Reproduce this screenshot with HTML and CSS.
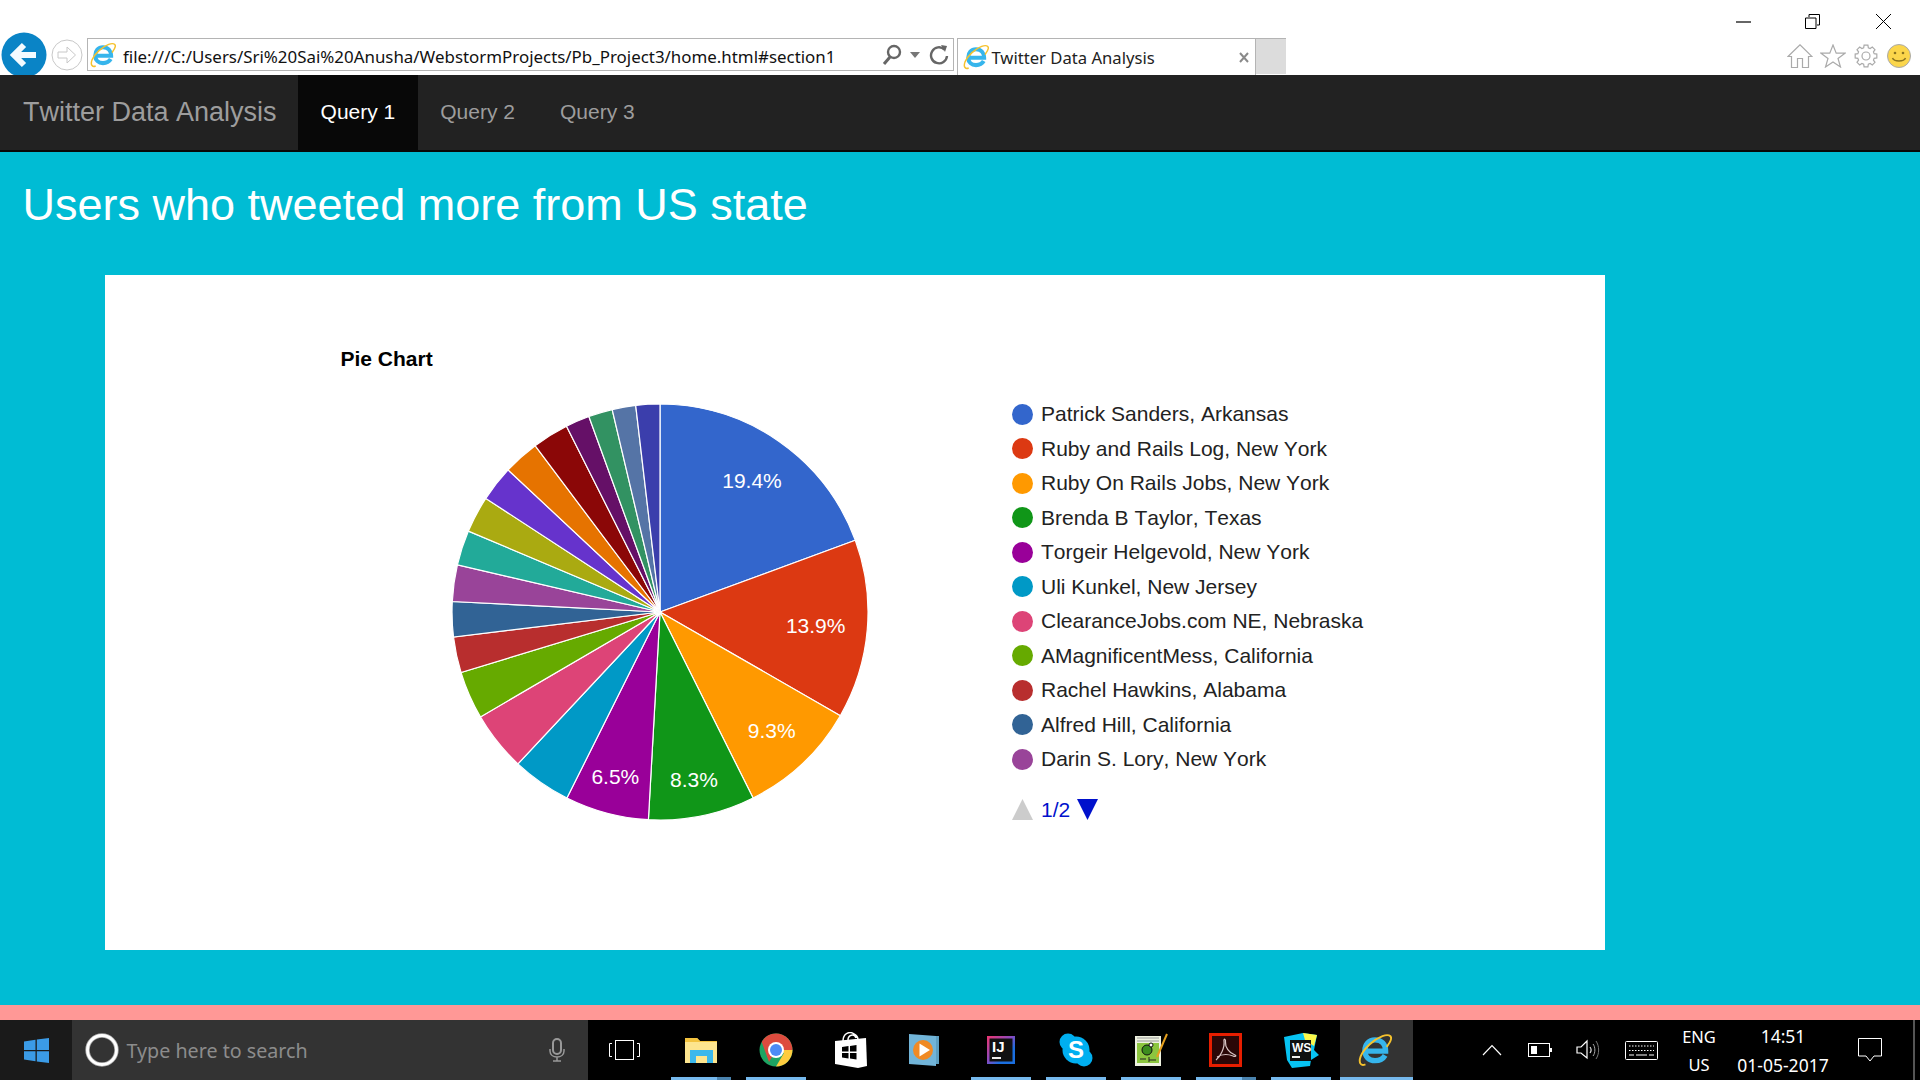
FILE: index.html
```html
<!DOCTYPE html>
<html lang="en">
<head>
<meta charset="utf-8">
<title>Twitter Data Analysis</title>
<link rel="stylesheet" href="styles.css">
</head>
<body>
<svg class="defs" width="0" height="0" aria-hidden="true">
  <symbol id="ie" viewBox="0 0 32 32">
    <path d="M7.500 17H26C26 10.500 22 6.500 16 6.500C10 6.500 6.500 11 6.500 16.500C6.500 22.500 10.500 26 16 26C20 26 23.500 24.500 25.500 21" fill="none" stroke="#36b5ec" stroke-width="5"/>
    <path d="M7 29.500C2 31.500 .5 27.500 2.500 22C6 14 15 6 23 3C28 1 32 2 31 6C30.500 8.500 28.500 11 27 13" fill="none" stroke="#f5c22d" stroke-width="1.800"/>
  </symbol>
</svg>

<header class="chrome">
  <div class="window-controls">
    <svg class="wc-min" width="15" height="2" viewBox="0 0 15 2"><path d="M0 1H15" stroke="#000" stroke-width="1.200"/></svg>
    <svg class="wc-restore" width="15" height="15" viewBox="0 0 15 15"><path d="M4 3V.5H14.500V11H12M.5 4H11V14.500H.5Z" fill="none" stroke="#000"/></svg>
    <svg class="wc-close" width="15" height="15" viewBox="0 0 15 15"><path d="M0 0L15 15M15 0L0 15" stroke="#000"/></svg>
  </div>
  <div class="toolbar">
    <svg class="back" width="46" height="46" viewBox="0 0 46 46"><circle cx="23" cy="23" r="22.500" fill="#0a84c6"/><path d="M35 23H14M23 13L13 23L23 33" fill="none" stroke="#f4fbff" stroke-width="6"/></svg>
    <svg class="forward" width="32" height="32" viewBox="0 0 32 32"><circle cx="16" cy="16" r="15" fill="#fff" stroke="#c8c8c8"/><path d="M7 13H16V8L24.500 16L16 24V19H7Z" fill="none" stroke="#c8c8c8"/></svg>
    <div class="address">
      <svg class="addr-ie" width="26" height="26"><use href="#ie"/></svg>
      <span class="url">file:///C:/Users/Sri%20Sai%20Anusha/WebstormProjects/Pb_Project3/home.html#section1</span>
      <svg class="addr-search" width="22" height="24" viewBox="0 0 22 24"><circle cx="13" cy="9" r="6" fill="none" stroke="#666" stroke-width="2.400"/><path d="M9 14L3 21" stroke="#666" stroke-width="3"/></svg>
      <svg class="addr-drop" width="10" height="6" viewBox="0 0 10 6"><path d="M0 0H10L5 6Z" fill="#777"/></svg>
      <svg class="addr-refresh" width="20" height="24" viewBox="0 0 20 24"><path d="M15.500 6.500A8 8 0 1 0 18 13" fill="none" stroke="#666" stroke-width="2.400"/><path d="M12 2L18 3L16 9Z" fill="#666"/></svg>
    </div>
    <div class="tab">
      <svg class="tab-ie" width="26" height="26"><use href="#ie"/></svg>
      <span class="tab-title">Twitter Data Analysis</span>
      <svg class="tab-close" width="10" height="11" viewBox="0 0 10 11"><path d="M1 1L9 10M9 1L1 10" stroke="#8a8a8a" stroke-width="2"/></svg>
    </div>
    <div class="new-tab"></div>
    <div class="tools">
      <svg width="26" height="24" viewBox="0 0 26 24"><path d="M1 12.500L13 .8L25 12.500H21.500V23.500H15.500V14.500H10.500V23.500H4.500V12.500Z" fill="none" stroke="#aaa" stroke-width="1.200"/></svg>
      <svg width="26" height="24" viewBox="0 0 26 24"><path d="M13 1L16.200 9.200H25L18 14.500L20.500 23L13 18L5.500 23L8 14.500L1 9.200H9.800Z" fill="none" stroke="#aaa" stroke-width="1.200"/></svg>
      <svg width="26" height="24" viewBox="-1 0 26 24"><path d="M9.660 3.830L10.090 1.170H13.910L14.340 3.830L16.120 4.560L18.310 2.990L21.010 5.690L19.440 7.880L20.170 9.660L22.830 10.090V13.910L20.170 14.340L19.440 16.120L21.010 18.310L18.310 21.010L16.120 19.440L14.340 20.170L13.910 22.830H10.090L9.660 20.170L7.880 19.440L5.690 21.010L2.990 18.310L4.560 16.120L3.830 14.340L1.170 13.910V10.090L3.830 9.660L4.560 7.880L2.990 5.690L5.690 2.990L7.880 4.560Z" fill="none" stroke="#aaa" stroke-width="1.200"/><circle cx="12" cy="12" r="4" fill="none" stroke="#aaa" stroke-width="1.200"/></svg>
      <svg width="26" height="24" viewBox="-1 0 26 24"><circle cx="12" cy="12" r="11.500" fill="#fbd64b" stroke="#aaa"/><circle cx="8" cy="9" r="1.300" fill="#8a7420"/><circle cx="16" cy="9" r="1.300" fill="#8a7420"/><path d="M5.500 14C7 18 17 18 18.500 14" fill="none" stroke="#8a7420" stroke-width="1.500"/></svg>
    </div>
  </div>
</header>

<nav class="navbar">
  <a class="brand">Twitter Data Analysis</a>
  <a class="nav-link active">Query 1</a>
  <a class="nav-link">Query 2</a>
  <a class="nav-link">Query 3</a>
</nav>

<main class="content">
  <h1 class="page-title">Users who tweeted more from US state</h1>
  <section class="card">
    <h2 class="chart-title">Pie Chart</h2>
    <div class="chart-row">
      <svg class="pie" width="420" height="420" viewBox="-210 -210 420 420">
        <g stroke="#fff" stroke-width="1.200">
          <path fill="#3366cc" d="M0 0L0 -208A208 208 0 0 1 195.300 -71.700Z"/>
          <path fill="#dc3912" d="M0 0L195.300 -71.700A208 208 0 0 1 180.300 103.700Z"/>
          <path fill="#ff9900" d="M0 0L180.300 103.700A208 208 0 0 1 93.100 186Z"/>
          <path fill="#109618" d="M0 0L93.100 186A208 208 0 0 1 -11.600 207.700Z"/>
          <path fill="#990099" d="M0 0L-11.600 207.700A208 208 0 0 1 -93.100 186Z"/>
          <path fill="#0099c6" d="M0 0L-93.100 186A208 208 0 0 1 -142.100 151.900Z"/>
          <path fill="#dd4477" d="M0 0L-142.100 151.900A208 208 0 0 1 -179.600 104.900Z"/>
          <path fill="#66aa00" d="M0 0L-179.600 104.900A208 208 0 0 1 -199 60.500Z"/>
          <path fill="#b82e2e" d="M0 0L-199 60.500A208 208 0 0 1 -206.500 25Z"/>
          <path fill="#316395" d="M0 0L-206.500 25A208 208 0 0 1 -207.700 -10.500Z"/>
          <path fill="#994499" d="M0 0L-207.700 -10.500A208 208 0 0 1 -202.600 -47.200Z"/>
          <path fill="#22aa99" d="M0 0L-202.600 -47.200A208 208 0 0 1 -191.600 -80.900Z"/>
          <path fill="#aaaa11" d="M0 0L-191.600 -80.900A208 208 0 0 1 -174.200 -113.600Z"/>
          <path fill="#6633cc" d="M0 0L-174.200 -113.600A208 208 0 0 1 -151.900 -142.100Z"/>
          <path fill="#e67300" d="M0 0L-151.900 -142.100A208 208 0 0 1 -124.900 -166.300Z"/>
          <path fill="#8b0707" d="M0 0L-124.900 -166.300A208 208 0 0 1 -93.500 -185.800Z"/>
          <path fill="#651067" d="M0 0L-93.500 -185.800A208 208 0 0 1 -71.100 -195.500Z"/>
          <path fill="#329262" d="M0 0L-71.100 -195.500A208 208 0 0 1 -47.800 -202.400Z"/>
          <path fill="#5574a6" d="M0 0L-47.800 -202.400A208 208 0 0 1 -24.300 -206.600Z"/>
          <path fill="#3b3eac" d="M0 0L-24.300 -206.600A208 208 0 0 1 0 -208Z"/>
        </g>
        <g class="pie-labels">
          <text x="92" y="-124.500">19.4%</text>
          <text x="155.700" y="20.500">13.9%</text>
          <text x="111.700" y="126">9.3%</text>
          <text x="34" y="175">8.3%</text>
          <text x="-44.700" y="172">6.5%</text>
        </g>
      </svg>
      <div class="legend">
        <div class="legend-row"><i class="dot c1"></i>Patrick Sanders, Arkansas</div>
        <div class="legend-row"><i class="dot c2"></i>Ruby and Rails Log, New York</div>
        <div class="legend-row"><i class="dot c3"></i>Ruby On Rails Jobs, New York</div>
        <div class="legend-row"><i class="dot c4"></i>Brenda B Taylor, Texas</div>
        <div class="legend-row"><i class="dot c5"></i>Torgeir Helgevold, New York</div>
        <div class="legend-row"><i class="dot c6"></i>Uli Kunkel, New Jersey</div>
        <div class="legend-row"><i class="dot c7"></i>ClearanceJobs.com NE, Nebraska</div>
        <div class="legend-row"><i class="dot c8"></i>AMagnificentMess, California</div>
        <div class="legend-row"><i class="dot c9"></i>Rachel Hawkins, Alabama</div>
        <div class="legend-row"><i class="dot c10"></i>Alfred Hill, California</div>
        <div class="legend-row"><i class="dot c11"></i>Darin S. Lory, New York</div>
        <div class="pager">
          <svg width="21" height="21" viewBox="0 0 21 21"><path d="M0 21L10.500 0L21 21Z" fill="#ccc"/></svg>
          <span class="pager-text">1/2</span>
          <svg width="21" height="21" viewBox="0 0 21 21"><path d="M0 0H21L10.500 21Z" fill="#0011cc"/></svg>
        </div>
      </div>
    </div>
  </section>
</main>

<div class="strip"></div>

<footer class="taskbar">
  <div class="start">
    <svg width="25" height="25" viewBox="0 0 25 25"><path d="M0 3.500L11.500 1.800V12H0ZM12.800 1.600L25 0V12H12.800ZM0 13.200H11.500V23.300L0 21.600ZM12.800 13.200H25V25L12.800 23.500Z" fill="#3b9be6"/></svg>
  </div>
  <div class="search">
    <svg class="cortana" width="34" height="34" viewBox="0 0 34 34"><circle cx="17" cy="17" r="14.500" fill="none" stroke="#aaa" stroke-width="4.400"/><circle cx="17" cy="17" r="14.500" fill="none" stroke="#fff" stroke-width="2.800"/></svg>
    <span class="search-text">Type here to search</span>
    <svg class="mic" width="16" height="24" viewBox="0 0 16 24"><rect x="4" y="1" width="8" height="15" rx="4" fill="none" stroke="#999" stroke-width="2"/><path d="M1 11V13C1 21 15 21 15 13V11M8 19V23M4 23H12" fill="none" stroke="#999" stroke-width="1.500"/></svg>
  </div>
  <div class="task-view">
    <svg width="32" height="20" viewBox="0 0 32 20"><rect x="6.500" y=".5" width="18" height="19" fill="none" stroke="#fff"/><path d="M3 3.500H.5V16.500H3M28 3.500H30.500V16.500H28" fill="none" stroke="#fff"/></svg>
  </div>
  <div class="app running split">
    <svg width="34" height="28" viewBox="0 0 34 28"><path d="M1 2H13L16 5H33V27H1Z" fill="#fde58f"/><path d="M1 2H13L16 5H33V6H1Z" fill="#f3c33f"/><path d="M6 27V14H29V27H23V20H12V27Z" fill="#3bb8ec"/></svg>
  </div>
  <div class="app running">
    <svg width="34" height="34" viewBox="0 0 34 34"><circle cx="17" cy="17" r="16.500" fill="#1da462"/><path d="M17 .5A16.500 16.500 0 0 1 33.500 17H17L10 29L2.700 9A16.500 16.500 0 0 1 17 .5Z" fill="#dd4b3e"/><path d="M17 17H33.500A16.500 16.500 0 0 1 17 33.500L25 20Z" fill="#fecc3f"/><circle cx="17" cy="17" r="8" fill="#fff"/><circle cx="17" cy="17" r="6" fill="#4c8bf5"/></svg>
  </div>
  <div class="app">
    <svg width="34" height="36" viewBox="0 0 34 36"><path d="M1 9L32 6L33 34L24 36L1 32Z" fill="#fff"/><path d="M9 9C9 1 16 -1 20 2C24 4 24 6 24 8M14 8C14 3 20 1 22 6" fill="none" stroke="#fff" stroke-width="1.500"/><path d="M8 15L14.500 14V19.500H8ZM16 14L22.500 13V19.500H16ZM8 21H14.500V26.500L8 25.500ZM16 21H22.500V27.500L16 26.500Z" fill="#000"/></svg>
  </div>
  <div class="app app-wmp">
    <svg width="30" height="34" viewBox="0 0 30 34"><path d="M27 3H30V31H27Z" fill="#5d9fc1"/><path d="M0 1L27 3V33L0 31Z" fill="#71b4d8"/><circle cx="14" cy="17" r="10" fill="#f08a24"/><path d="M10.500 10.500L21 17L10.500 23.500Z" fill="#fff"/></svg>
  </div>
  <div class="app running">
    <svg width="28" height="28" viewBox="0 0 28 28"><defs><linearGradient id="ij" x1="0" y1="0" x2="1" y2="1"><stop offset="0" stop-color="#f0356f"/><stop offset=".45" stop-color="#8a4ac0"/><stop offset=".7" stop-color="#1a6fe0"/></linearGradient></defs><rect width="28" height="28" fill="url(#ij)"/><rect x="2.500" y="2.500" width="23" height="23" fill="#111"/><text class="ico-text ij" x="5" y="16">IJ</text><path d="M5 22H14" stroke="#eee" stroke-width="2"/></svg>
  </div>
  <div class="app running">
    <svg width="34" height="34" viewBox="0 0 34 34"><circle cx="17" cy="17" r="13.500" fill="#00aff0"/><circle cx="9" cy="9" r="8.500" fill="#00aff0"/><circle cx="25" cy="25" r="8.500" fill="#00aff0"/><text class="ico-text skype" x="17" y="25">S</text></svg>
  </div>
  <div class="app running">
    <svg width="34" height="34" viewBox="0 0 34 34"><rect x="1" y="3" width="26" height="30" fill="#eef2e0"/><path d="M3 5H25M3 8H25" stroke="#9a9a9a"/><rect x="3" y="10" width="22" height="20" fill="#8cc63f"/><circle cx="13" cy="17" r="5" fill="#3c8d1e" stroke="#111"/><circle cx="17" cy="12" r="2" fill="#fff" stroke="#111"/><path d="M6 26H12M15 24V29M15 27H22" stroke="#222"/><path d="M23 24L33 1" stroke="#e5a01e" stroke-width="2"/></svg>
  </div>
  <div class="app running split">
    <svg width="33" height="34" viewBox="0 0 33 34"><rect x="1.500" y="1.500" width="30" height="31" fill="#2a0707" stroke="#e61e00" stroke-width="3"/><path d="M7 27C11 24 16 15 15 8C14.500 5 17 6 16.500 9C16 14 20 20 26 22C28 23 26 24 24 23C19 21 13 21 8 24" fill="none" stroke="#d8c4c4" stroke-width="1.200"/></svg>
  </div>
  <div class="app running">
    <svg width="36" height="36" viewBox="0 0 36 36"><path d="M1 5L20 1L34 3L31 18L36 23L28 28L27 34L9 36L4 28Z" fill="#07c3f2"/><path d="M20 1L34 3L31 14L22 8Z" fill="#fcf84a"/><rect x="7" y="8" width="21" height="21" fill="#111"/><text class="ico-text ws" x="9" y="20">WS</text><path d="M9 25H17" stroke="#eee" stroke-width="2"/></svg>
  </div>
  <div class="app running current">
    <svg class="taskbar-ie" width="34" height="34"><use href="#ie"/></svg>
  </div>
  <div class="tray">
    <svg class="t-chevron" width="20" height="12" viewBox="0 0 20 12"><path d="M1 11L10 1.500L19 11" fill="none" stroke="#fff" stroke-width="1.200"/></svg>
    <svg class="t-battery" width="24" height="14" viewBox="0 0 24 14"><rect x=".5" y=".5" width="21" height="13" fill="none" stroke="#fff"/><rect x="3" y="3" width="6" height="8" fill="#fff"/><rect x="22" y="5" width="2" height="4" fill="#fff"/></svg>
    <svg class="t-volume" width="24" height="24" viewBox="0 0 24 24"><path d="M1 9V15H5L11 20V3L5 9Z" fill="none" stroke="#fff" stroke-width="1.200"/><path d="M14 9C15.500 11 15.500 13 14 15" fill="none" stroke="#ddd" stroke-width="1.200"/><path d="M17 6C19.500 9 19.500 15 17 18" fill="none" stroke="#aaa"/><path d="M20 3C23.500 8 23.500 16 20 21" fill="none" stroke="#777"/></svg>
    <svg class="t-keyboard" width="33" height="19" viewBox="0 0 33 19"><rect x=".5" y=".5" width="32" height="18" rx="1" fill="none" stroke="#fff"/><path d="M4 5H29M4 9.500H29" stroke="#fff" stroke-dasharray="1.500 1.500"/><path d="M4 14H9M11 14H22M24 14H29" stroke="#fff"/></svg>
    <div class="lang"><span>ENG</span><span>US</span></div>
    <div class="clock"><span>14:51</span><span>01-05-2017</span></div>
    <svg class="t-action" width="24" height="24" viewBox="0 0 24 24"><path d="M.5 .5H23.500V18H16L12 23L8 18H.5Z" fill="none" stroke="#fff"/></svg>
    <div class="show-desktop"></div>
  </div>
</footer>
</body>
</html>
```

FILE: styles.css
```css
* { box-sizing: border-box; }
html, body { margin: 0; padding: 0; }
body {
  width: 1920px;
  height: 1080px;
  overflow: hidden;
  display: flex;
  flex-direction: column;
  font-family: "Liberation Sans", Arial, sans-serif;
  font-kerning: none;
  background: #00bcd4;
}
.defs { position: absolute; }

/* browser chrome */
.chrome { height: 75px; background: #fff; flex: none; }
.window-controls { height: 38px; padding-top: 14px; display: flex; align-items: flex-start; }
.wc-min { margin-left: 1736px; margin-top: 7px; }
.wc-restore { margin-left: 54px; }
.wc-close { margin-left: 56px; }
.toolbar { height: 37px; display: flex; align-items: flex-start; }
.back { margin: -6px 0 0 1px; flex: none; }
.forward { margin: 1px 0 0 4px; flex: none; }
.address {
  margin-left: 4px;
  width: 867.400px;
  height: 33px;
  border: 1px solid #b4b4b4;
  display: flex;
  align-items: center;
  padding: 0 4px 0 2px;
  flex: none;
}
.addr-ie { flex: none; }
.url { margin: 5px 0 0 7px; font: 16.900px/1 "Noto Sans", sans-serif; color: #111; white-space: nowrap; flex: 1; }
.addr-search { flex: none; margin-left: 8px; }
.addr-drop { flex: none; margin: 0 9px 0 7.400px; }
.addr-refresh { flex: none; }
.tab {
  margin-left: 3px;
  width: 299px;
  height: 37px;
  border-top: 1px solid #b4b4b4;
  border-left: 1px solid #b4b4b4;
  border-right: 1px solid #b4b4b4;
  display: flex;
  align-items: center;
  padding: 0 6px 0 5px;
  flex: none;
}
.tab-ie { flex: none; }
.tab-title { margin: 2px 0 0 2px; flex: 1; font: 16.650px/1 "Noto Sans", sans-serif; color: #222; white-space: nowrap; }
.new-tab { width: 30px; height: 36px; background: #dcdcdc; border-top: 1px solid #b4b4b4; flex: none; }
.tools { margin-left: 501px; margin-top: 6px; display: flex; gap: 7px; align-items: center; flex: none; }

/* navbar */
.navbar {
  height: 77px;
  flex: none;
  background: #222;
  border-bottom: 2px solid #080808;
  display: flex;
  align-items: stretch;
}
.navbar a { display: flex; align-items: center; }
.brand { font-size: 27px; color: #9d9d9d; padding-left: 23px; padding-right: 21.500px; }
.nav-link { font-size: 21px; color: #9d9d9d; padding-left: 22.500px; padding-right: 22.500px; padding-bottom: 2px; }
.nav-link.active { color: #fff; background: #080808; }

/* content */
.content { flex: 1; min-height: 0; padding-top: 28px; }
.page-title { margin: 0 0 0 22.500px; font-size: 45px; line-height: 50px; font-weight: 400; color: #fff; }
.card {
  margin: 45px 0 0 105px;
  width: 1500px;
  height: 675px;
  background: #fff;
  padding: 72px 0 0 235.500px;
}
.chart-title { margin: 0; font-size: 21px; line-height: 24px; font-weight: 700; color: #000; }
.chart-row { display: flex; align-items: flex-start; margin-top: 26px; }
.pie { flex: none; margin: 5px 0 0 109.500px; }
.pie-labels text { fill: #fff; font-size: 21px; text-anchor: middle; }
.legend { margin-left: 142px; }
.legend-row { height: 34.500px; display: flex; align-items: center; font-size: 21px; color: #222; white-space: nowrap; }
.dot { width: 21px; height: 21px; border-radius: 50%; margin-right: 8px; flex: none; }
.c1 { background: #3366cc; }
.c2 { background: #dc3912; }
.c3 { background: #ff9900; }
.c4 { background: #109618; }
.c5 { background: #990099; }
.c6 { background: #0099c6; }
.c7 { background: #dd4477; }
.c8 { background: #66aa00; }
.c9 { background: #b82e2e; }
.c10 { background: #316395; }
.c11 { background: #994499; }
.pager { margin-top: 16px; display: flex; align-items: center; height: 34.500px; }
.pager-text { font-size: 21px; color: #0011cc; margin: 0 7px 0 8px; }

/* taskbar */
.strip { height: 15px; background: #ff9896; flex: none; }
.taskbar { height: 60px; background: #000; display: flex; align-items: stretch; flex: none; }
.start { width: 72px; background: #1a1a1a; display: flex; align-items: center; justify-content: center; flex: none; }
.search { width: 516px; background: #333; display: flex; align-items: center; padding-left: 13px; flex: none; }
.cortana { flex: none; }
.search-text { margin: 2px 0 0 7.500px; flex: 1; font: 19.700px/1 "Noto Sans", sans-serif; color: #8c8c8c; }
.mic { flex: none; margin-right: 23px; }
.task-view { width: 75px; display: flex; align-items: center; justify-content: center; padding-right: 2px; flex: none; }
.app { width: 75px; display: flex; align-items: center; justify-content: center; position: relative; flex: none; }
.app-wmp { padding-right: 4px; }
.app.running::after {
  content: "";
  position: absolute;
  left: 8px;
  right: 7px;
  bottom: 0;
  height: 3px;
  background: #76b9ed;
}
.app.split::before {
  content: "";
  position: absolute;
  right: 7px;
  bottom: 0;
  width: 14px;
  height: 3px;
  background: #4a83ae;
  z-index: 1;
}
.app.current { width: 73px; margin-left: 2px; background: #333; }
.app.current::after { left: 0; right: 0; }
.taskbar-ie { margin-right: 4px; }
.ico-text { font-family: "Liberation Sans", sans-serif; font-weight: 700; fill: #fff; }
.ij { font-size: 15px; }
.skype { font-size: 24px; text-anchor: middle; }
.ws { font-size: 12px; }
.tray { flex: 1; display: flex; align-items: center; color: #fff; font: 17.500px/1 "Noto Sans", sans-serif; }
.t-chevron { margin-left: 69px; flex: none; }
.t-battery { margin-left: 26px; flex: none; }
.t-volume { margin-left: 24px; flex: none; }
.t-keyboard { margin-left: 25px; flex: none; }
.lang, .clock { display: flex; flex-direction: column; align-items: center; gap: 11px; padding-top: 2px; flex: none; }
.lang { margin-left: 21px; width: 40px; font-size: 16.500px; }
.clock { margin-left: 11px; width: 106px; }
.t-action { margin-left: 22px; flex: none; }
.show-desktop { margin-left: 31px; width: 2px; height: 60px; background: #555; flex: none; }
```
